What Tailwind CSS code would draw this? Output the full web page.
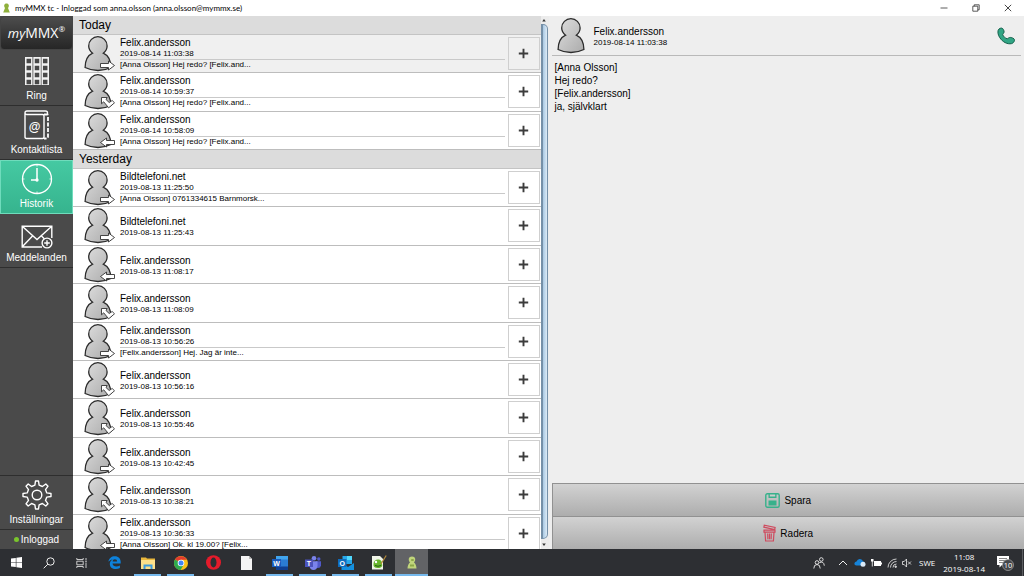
<!DOCTYPE html>
<html lang="sv">
<head>
<meta charset="utf-8">
<title>myMMX tc</title>
<script src="https://cdn.jsdelivr.net/npm/@tailwindcss/browser@4"></script>
</head>
<body class="flex h-screen flex-col overflow-hidden bg-white font-['Liberation_Sans',Arial,sans-serif] text-[10px] text-black">

<svg class="absolute size-0" aria-hidden="true">
  <defs>
    <linearGradient id="body" x1="0" y1="0" x2="1" y2="1"><stop offset="0" stop-color="#dedede"/><stop offset="1" stop-color="#ababab"/></linearGradient>
    <symbol id="person" viewBox="0 0 32 37">
      <path d="M9.6 18.2C6.900 16 5.700 13.500 5.700 10.900A9.200 9.200 0 0 1 24.100 10.900C24.100 13.500 23 16 20.300 18.200C25.400 20.500 27.800 26 27.900 32.500C20 36.500 10 36.500 2.100 32.500C2.200 26 4.500 20.500 9.600 18.200Z" fill="url(#body)" stroke="#2b2b2b" stroke-width="1.300"/>
    </symbol>
    <symbol id="out" viewBox="0 0 32 37"><path d="M17.500 28.500h8v-2.500l6 4.500-6 4.500v-2.500h-8z" fill="#fff" stroke="#333" stroke-width=".9"/></symbol>
    <symbol id="in" viewBox="0 0 32 37"><path d="M31.500 28.500h-8v-2.500l-6 4.500 6 4.500v-2.500h8z" fill="#fff" stroke="#333" stroke-width=".9"/></symbol>
    <symbol id="missed" viewBox="0 0 32 37"><path d="M18.500 24.500h5.700l-1.200 2 3.200 3 3-2 2.300 2.300-5.800 5-5-6-2.200 2z" fill="#fff" stroke="#333" stroke-width=".9"/></symbol>
  </defs>
</svg>

<header class="flex h-4 shrink-0 items-center bg-white">
  <svg class="ml-[3px] h-[10px] w-[7px]" viewBox="0 0 7 10"><path d="M2 5C.5 3 1 .5 3.500.5S6.500 3 5 5l1.800 4.500H.2z" fill="#8fb03c"/></svg>
  <h1 class="ml-[5px] grow font-['Lato','Open_Sans',sans-serif] text-[8px] text-black">myMMX tc - Inloggad som anna.olsson (anna.olsson@mymmx.se)</h1>
  <button aria-label="Minimera" class="flex w-8 justify-center"><svg class="size-2" viewBox="0 0 8 8"><path d="M.5 4h7" stroke="#333" stroke-width=".8"/></svg></button>
  <button aria-label="Återställ" class="flex w-8 justify-center"><svg class="size-2" viewBox="0 0 8 8" fill="none" stroke="#333" stroke-width=".8"><path d="M.8 2.200h5v5h-5zM2.200 2.200V.8h5v5H5.800"/></svg></button>
  <button aria-label="Stäng" class="flex w-8 justify-center"><svg class="size-2" viewBox="0 0 8 8"><path d="M.8.8l6.400 6.400M7.200.8L.8 7.200" stroke="#333" stroke-width=".9"/></svg></button>
</header>

<div class="flex min-h-0 grow">
  <nav class="flex w-[73px] shrink-0 flex-col bg-[#4a4a4a] text-center leading-3 text-white">
    <div class="mb-[2px] flex h-[34px] items-center justify-center rounded border border-[#444] bg-linear-to-b from-[#4d4d4d] to-[#262626]">
      <span class="flex items-center font-['Open_Sans',sans-serif] text-[14px] leading-4"><span class="text-[13px] font-medium italic">my</span>MMX<sup class="text-[8px]">®</sup></span>
    </div>
    <button class="flex h-[54px] flex-col items-center justify-end border-b border-[#2e2e2e] pb-[3px]">
      <svg class="mb-1 h-[30px] w-6" viewBox="0 0 24 30"><path fill="#f2f2f2" d="M0 1h7.500v28H0zM8.300 1h7.500v28H8.300zM16.500 1h7.500v28h-7.500z"/><path d="M3.800 2.800v26M12 2.800v26M20.200 2.800v26" stroke="#484848" stroke-width="4.500" stroke-dasharray="4.500 2.500"/></svg>
      Ring
    </button>
    <button class="flex h-[54px] flex-col items-center justify-end border-b border-[#2e2e2e] pb-[3px]">
      <svg class="mb-1 h-[30px] w-[26px]" viewBox="0 0 26 30" fill="none" stroke="#fff"><path d="M2.500 4.500h16q1.500 0 1.500 1.500V27q0 1.500-1.500 1.500h-16Q1 28.500 1 27V3Q1 1 3 1h18.500q2 0 2 2v2M2.500 4.500Q1 4 1 3" stroke-width="1.400"/><path d="M20 4.500h2.500q1.500 0 1.500 1.500v20.500q0 2-2 2h-2" stroke-width="1.800" stroke-dasharray="4 1.500"/><text x="10.500" y="20.500" text-anchor="middle" font-size="12" fill="#fff" stroke="none" font-family="Liberation Sans" font-weight="bold">@</text></svg>
      Kontaktlista
    </button>
    <button aria-current="page" class="flex h-[54px] flex-col items-center justify-end border border-[#6fdcbc] bg-linear-to-b from-[#45c9a2] to-[#36b48e] pb-[3px]">
      <svg class="mb-[3px] size-8" viewBox="0 0 32 32" fill="none" stroke="#fff" stroke-width="1.300"><circle cx="16" cy="16" r="14.500"/><path d="M16 5v12H10" stroke-width="1.500"/><path d="M16 1.500v2M16 28.500v2M1.500 16h2M28.500 16h2" stroke-width=".8"/><circle cx="16" cy="17" r="1" fill="#fff"/></svg>
      Historik
    </button>
    <button class="flex h-[54px] flex-col items-center justify-end border-b border-[#2e2e2e] pb-[3px]">
      <svg class="mb-[3px] h-6 w-8" viewBox="0 0 32 24" fill="none" stroke="#fff" stroke-width="1.400"><path d="M21 22H1.200V1.200h29.600V13M1.500 1.500L16 14.500 30.500 1.500M1.500 21.500L11.500 11M20.500 11l3 3"/><circle cx="26" cy="18" r="4.900" fill="#484848"/><path d="M26 15.200v5.600M23.200 18h5.600"/></svg>
      Meddelanden
    </button>
    <button class="mt-auto flex h-[55px] flex-col items-center justify-end border-y border-[#2e2e2e] pb-[3px]">
      <svg class="mb-1 size-[30px]" viewBox="0 0 30 30" fill="none" stroke="#fff" stroke-width="1.400" stroke-linejoin="round"><path d="M12.900 5.200L13.500 1h3l.6 4.200 3.300 1.300 3.400-2.500 2.200 2.200-2.500 3.400 1.300 3.300 4.200.6v3l-4.200.6-1.300 3.300 2.500 3.400-2.200 2.200-3.400-2.500-3.300 1.300-.6 4.200h-3l-.6-4.200-3.300-1.300-3.400 2.500L4 23.800l2.500-3.400-1.300-3.300L1 16.500v-3l4.200-.6 1.300-3.300L4 6.200 6.200 4l3.400 2.500z"/><circle cx="15" cy="15" r="4.800"/></svg>
      Inställningar
    </button>
    <div class="flex h-[19px] items-center justify-center gap-[2px] text-[10px]"><span class="size-[5px] rounded-full bg-[#7ac52c]"></span>Inloggad</div>
  </nav>

  <main class="grid min-w-0 grow grid-cols-2">
    <section aria-label="Historik" class="flex min-h-0 overflow-hidden">
      <div id="history" class="min-w-0 grow overflow-hidden bg-white"></div>
      <div class="flex w-2 shrink-0 flex-col bg-[#ececec]" aria-hidden="true">
        <svg class="h-2 w-[6px]" viewBox="0 0 6 8"><path d="M3 3l1.800 2.500H1.200z" fill="#333"/></svg>
        <div class="w-[7px] grow rounded-r-[5px] border border-l-2 border-[#7590a8] bg-linear-to-r from-[#a9c8e2] to-[#dcebf7]"></div>
        <svg class="h-[10px] w-[6px]" viewBox="0 0 6 10"><path d="M3 7l1.800-2.500H1.200z" fill="#333"/></svg>
      </div>
    </section>

    <section aria-label="Samtal" class="flex min-w-0 flex-col bg-[#eeeeee] pl-[3px]">
      <div class="mr-[3px] flex h-10 shrink-0 items-center border-b border-[#b9b9b9]">
        <svg class="ml-1 h-[37px] w-8"><use href="#person"/></svg>
        <div class="ml-[6px] grow pt-[2px]"><h2 class="leading-3">Felix.andersson</h2><p class="text-[8px] leading-[10px]">2019-08-14 11:03:38</p></div>
        <button aria-label="Ring upp" class="mr-[6px]"><svg class="size-[18px]" viewBox="0 0 18 18"><path d="M1.200 3.200C1.800 1.500 4.500.3 5.800 1.700c1 1.300 1.700 2.900 1 4.200-.5.900-1.300 1.100-1 2 .7 1.700 2.300 3.200 4.200 3.800 1 .2 1.300-.9 2.500-1.200 1.500-.3 3.200.4 4.500 1.400 1.300 1.300-.2 4-2.300 4.700-4.500 1-9.200-1.800-11.900-5.900C1.200 8.300.5 5.400 1.200 3.200z" fill="#31a585" stroke="#14604b" stroke-width="1"/></svg></button>
      </div>
      <div class="grow pt-[5px] pl-[3px] leading-[13px]"><p>[Anna Olsson]</p><p>Hej redo?</p><p>[Felix.andersson]</p><p>ja, självklart</p></div>
      <button class="flex h-[33px] items-center justify-center gap-1 border-t border-l border-[#919191] bg-linear-to-b from-[#d2d2d2] to-[#adadad]">
        <svg class="size-[15px]" viewBox="0 0 15 15"><rect x=".8" y=".8" width="13.400" height="13.400" rx="1.500" fill="none" stroke="#37b18b" stroke-width="1.400"/><path d="M3.500 1h8v4h-8zM3.500 7.500h8v5h-8z" fill="#37b18b"/><path d="M4.800 1.500h5.400v2H4.800z" fill="#ccc"/></svg>Spara
      </button>
      <button class="flex h-[33px] items-center justify-center gap-1 border-t border-l border-[#919191] bg-linear-to-b from-[#d2d2d2] to-[#adadad]">
        <svg class="h-[18px] w-[13px]" viewBox="0 0 13 18" fill="none" stroke="#cf4a5e" stroke-width="1.200"><path d="M.9 3.200l.4-2 10.800 2.300-.4 2zM1 6.200h11v2H1zM2 8.200l.6 8.800h7.800l.6-8.800M4.700 9.500l.2 5.700M6.500 9.500v5.700M8.300 9.500l-.2 5.700"/></svg>Radera
      </button>
    </section>
  </main>
</div>

<footer class="flex h-[27px] shrink-0 bg-[#2d2f33] text-white">
  <button aria-label="Start" class="flex w-8 items-center justify-center"><svg class="size-[11px]" viewBox="0 0 11 11"><path d="M0 1.600L4.800.9v4.300H0zM5.400.8L11 0v5.200H5.400zM0 5.800h4.800v4.300L0 9.400zM5.400 5.800H11V11l-5.600-.8z" fill="#fff"/></svg></button>
  <button aria-label="Sök" class="flex w-[33px] items-center justify-center"><svg class="size-3" viewBox="0 0 12 12" fill="none" stroke="#eee"><circle cx="7.500" cy="4.500" r="3.700"/><path d="M4.800 7.200L.7 11.300"/></svg></button>
  <button aria-label="Aktivitetsvy" class="flex w-[33px] items-center justify-center"><svg class="h-[10px] w-3" viewBox="0 0 12 10" fill="none" stroke="#ddd" stroke-width=".9"><path d="M.8 0v1.500h6.400V0M.8 3.200h6.400v3.600H.8zM.8 10V8.500h6.400V10M10 0v2M10 4.500V10M9 3.200h2"/></svg></button>
  <button aria-label="Edge" class="flex w-[33px] items-center justify-center"><svg class="size-[13px]" viewBox="0 0 13 13"><path d="M.4 5.800C1 2.200 3.500.2 6.800.2c3.800 0 6 2.600 5.900 6v1.400H4.500c.2 2 1.800 2.800 3.800 2.800 1.400 0 2.600-.4 3.600-1v2.700c-1.200.6-2.600.9-4.200.9C4.200 13 1.800 11 1.800 7.900c0-2 1.200-3.700 2.900-4.500C2.900 3.600 1.400 4.500.4 5.800zM4.600 5.500h4.500c0-1.300-.8-2.200-2.200-2.200-1.300 0-2.100.9-2.300 2.200z" fill="#0d82dc"/></svg></button>
  <button aria-label="Utforskaren" class="flex w-[33px] flex-col items-center justify-between"><svg class="mt-2 h-3 w-[14px]" viewBox="0 0 14 12"><path d="M0 .5h5l1 1h8V12H0z" fill="#e9b83d"/><path d="M0 3h14v9H0z" fill="#fde08a"/><path d="M2.500 12V7.500h9V12h-2V9.500h-5V12z" fill="#3e9bdc"/></svg><span class="h-[2px] w-[27px] bg-[#76b9ed]"></span></button>
  <button aria-label="Chrome" class="flex w-[33px] flex-col items-center justify-between"><svg class="mt-[7px] size-[14px]" viewBox="0 0 14 14"><circle cx="7" cy="7" r="7" fill="#fbc116"/><path d="M7 7L1 3.500A7 7 0 0 1 13.100 3.800H7z" fill="#e33b2e"/><path d="M1 3.400A7 7 0 0 0 6.600 14L9.800 8.600 7 7z" fill="#2da94f"/><circle cx="7" cy="7" r="3.300" fill="#fff"/><circle cx="7" cy="7" r="2.500" fill="#4285f4"/></svg><span class="h-[2px] w-[27px] bg-[#76b9ed]"></span></button>
  <button aria-label="Opera" class="flex w-[33px] items-center justify-center"><svg class="size-[15px]" viewBox="0 0 15 15"><ellipse cx="7.500" cy="7.500" rx="7.500" ry="7.300" fill="#e51b2b"/><ellipse cx="7.500" cy="7.500" rx="3" ry="5" fill="#2d2f33"/></svg></button>
  <button aria-label="Dokument" class="flex w-[33px] items-center justify-center"><svg class="h-[14px] w-[11px]" viewBox="0 0 11 14"><path d="M0 0h8l3 3v11H0z" fill="#f4f4f4"/><path d="M8 0v3h3z" fill="#bbb"/></svg></button>
  <button aria-label="Word" class="flex w-[33px] flex-col items-center justify-between"><svg class="mt-[7px] h-[14px] w-4" viewBox="0 0 16 14"><path d="M4 0h12v14H4z" fill="#2b7cd3"/><path d="M4 0h12v3.500H4z" fill="#41a5ee"/><path d="M4 10.500h12V14H4z" fill="#103f91"/><path d="M0 3h9v8H0z" fill="#185abd"/><text x="4.500" y="9.500" text-anchor="middle" font-size="7" font-weight="bold" fill="#fff">W</text></svg><span class="h-[2px] w-[27px] bg-[#76b9ed]"></span></button>
  <button aria-label="Teams" class="flex w-[33px] flex-col items-center justify-between"><svg class="mt-[7px] h-[14px] w-4" viewBox="0 0 16 14"><circle cx="9" cy="2.300" r="2.300" fill="#7b83eb"/><circle cx="13.800" cy="3" r="1.700" fill="#5059c9"/><path d="M11 5.300h5v4.200q-.5 3-4 2.500z" fill="#5059c9"/><path d="M4.500 5.300h8V10q-.5 4-4 4t-4-4z" fill="#7b83eb"/><path d="M0 3.500h8v7.500H0z" fill="#4b53bc"/><text x="4" y="9.700" text-anchor="middle" font-size="7" font-weight="bold" fill="#fff">T</text></svg><span class="h-[2px] w-[27px] bg-[#76b9ed]"></span></button>
  <button aria-label="Outlook" class="flex w-[33px] flex-col items-center justify-between"><svg class="mt-[7px] h-[14px] w-4" viewBox="0 0 16 14"><path d="M4.500 0H14v8H4.500z" fill="#28a8ea"/><path d="M9 0h5v4H9z" fill="#50d9ff"/><path d="M3.500 7L10 11l6-4v7H3.500z" fill="#1490df"/><path d="M0 3h8.500v8H0z" fill="#0f6cbd"/><text x="4.200" y="9.500" text-anchor="middle" font-size="7" font-weight="bold" fill="#fff">O</text></svg><span class="h-[2px] w-[27px] bg-[#76b9ed]"></span></button>
  <button aria-label="Notepad++" class="flex w-[33px] flex-col items-center justify-between"><svg class="mt-[6px] h-[15px] w-4" viewBox="0 0 16 15"><path d="M1 1h8l3 3v10.500H1z" fill="#f1f5e9"/><path d="M2.500 9c0-3 2-4.500 4.500-4.500S11.500 6.500 11 9c1 2-.5 4-4 4s-5-1.500-4.500-4z" fill="#67b52c"/><circle cx="5" cy="7" r="1.200" fill="#fff"/><path d="M4 10.500q3 1.500 6 0" stroke="#255e16" fill="none"/><path d="M15.200.5L10 9" stroke="#b48a3a" stroke-width="1.200"/></svg><span class="h-[2px] w-[27px] bg-[#76b9ed]"></span></button>
  <button aria-label="myMMX" class="flex w-[33px] items-center justify-center border-b-2 border-b-[#76b9ed] bg-[#626366] pt-[2px]"><svg class="h-[13px] w-[10px]" viewBox="0 0 10 13"><path d="M3 6.500C.8 4 1.500.5 5 .5S9.200 4 7 6.500c1.500 1 2.500 3.500 2.500 6h-9c0-2.500 1-5 2.500-6z" fill="#c0d47b"/><path d="M4.200 3h2.500v2H4.200zM3 8.500h4v2H3z" fill="#8da749"/></svg></button>

  <div class="ml-auto flex items-center font-['Open_Sans',sans-serif] text-[8px]">
    <svg class="mr-[13px] size-3" viewBox="0 0 12 12" fill="none" stroke="#eee" stroke-width=".9"><circle cx="4" cy="5.500" r="1.800"/><circle cx="8.300" cy="2.500" r="1.800"/><path d="M.8 11.500q0-4 3.200-4t3.200 4M6.300 5.700q4.500-2 5 3"/></svg>
    <svg class="mr-[6px] h-[10px] w-[10px]" viewBox="0 0 10 10" fill="none" stroke="#eee"><path d="M1 7l4-4 4 4"/></svg>
    <svg class="mr-[5px] h-[9px] w-3" viewBox="0 0 12 9"><path d="M2.500 7.500Q0 7 .5 5q.5-1.500 2-1.500Q3.500.8 6 1t3 2.500q2.500.3 2 2.500-.5 1.500-2 1.500z" fill="#1683d8"/><circle cx="9" cy="6.300" r="2.500" fill="#dbeaf6"/></svg>
    <svg class="mr-[5px] h-2 w-[11px]" viewBox="0 0 11 8"><path d="M3 2h7v5H3z" fill="#fff"/><path d="M10 3.500h1v2h-1zM0 0h2.500v2.500H0z" fill="#fff"/><path d="M1.300 2v5.500" stroke="#fff" stroke-width=".8"/></svg>
    <svg class="mr-[5px] size-[10px]" viewBox="0 0 10 10" fill="none" stroke="#ddd" stroke-width=".9"><path d="M1 9.500A8.500 8.500 0 0 1 9.500 1M3.500 9.500a6 6 0 0 1 6-6M6 9.500A3.500 3.500 0 0 1 9.500 6"/><circle cx="8.700" cy="8.700" r=".8" fill="#ddd"/></svg>
    <svg class="mr-[7px] size-[10px]" viewBox="0 0 10 10" fill="none" stroke="#eee" stroke-width=".8"><path d="M.5 3.500h1.700L4.500 1v8L2.200 6.500H.5zM6 3.500l3 3M9 3.500l-3 3"/></svg>
    <span class="mr-2">SWE</span>
    <time class="mr-3 text-center leading-3">11:08<br>2019-08-14</time>
    <button aria-label="Meddelandecenter" class="mr-2 border-0"><svg class="h-4 w-[17px]" viewBox="0 0 17 16"><path d="M0 1h12v9H5l-2.500 2.500V10H0z" fill="#fff"/><path d="M2 3.500h8M2 5.500h8M2 7.500h5" stroke="#555" stroke-width=".7"/><circle cx="11" cy="10" r="5.500" fill="#45474b" stroke="#aaa" stroke-width=".7"/><text x="11" y="12.700" text-anchor="middle" font-size="7.500" fill="#fff">10</text></svg></button>
    <span class="mr-px h-full w-px bg-[#5b5d61]"></span>
  </div>
</footer>

<script>
  // type: out = outgoing, in = incoming, missed = missed call
  const F = 'Felix.andersson', B = 'Bildtelefoni.net', HEJ = '[Anna Olsson] Hej redo? [Felix.and...';
  const today = [
    [F, '2019-08-14 11:03:38', 'out', HEJ], [F, '2019-08-14 10:59:37', 'missed', HEJ], [F, '2019-08-14 10:58:09', 'in', HEJ]
  ];
  const yesterday = [
    [B, '2019-08-13 11:25:50', 'out', '[Anna Olsson] 0761334615 Barnmorsk...'],
    [B, '2019-08-13 11:25:43', 'out'], [F, '2019-08-13 11:08:17', 'in'], [F, '2019-08-13 11:08:09', 'missed'],
    [F, '2019-08-13 10:56:26', 'out', '[Felix.andersson] Hej. Jag är inte...'],
    [F, '2019-08-13 10:56:16', 'missed'], [F, '2019-08-13 10:55:46', 'missed'], [F, '2019-08-13 10:42:45', 'out'],
    [F, '2019-08-13 10:38:21', 'missed'], [F, '2019-08-13 10:36:33', 'in', '[Anna Olsson] Ok. kl 19.00? [Felix...']
  ];
  const row = ([name, date, type, text], selected) => `
    <li class="flex items-start border-b border-[#bdbdbd] ${selected ? 'bg-[#f0f0f0]' : 'bg-white'}">
      <svg class="ml-[10px] h-[37px] w-8 shrink-0"><use href="#person"/><use href="#${type}"/></svg>
      <div class="mr-[3px] ml-[5px] flex min-w-0 grow flex-col ${text ? 'pt-[2px]' : 'pt-[9px]'}">
        <h3 class="leading-3">${name}</h3>
        <p class="text-[8px] leading-[10px]">${date}</p>
        ${text ? `<p class="border-t border-[#c9c9c9] text-[8px] leading-[10px]">${text}</p>` : ''}
      </div>
      <button aria-label="Lägg till" class="mt-[2px] mr-px flex h-[33px] w-8 shrink-0 items-center justify-center border border-[#cfcfcf]">
        <svg class="size-[11px]" viewBox="0 0 11 11"><path d="M5.500.8v9.400M.8 5.500h9.400" stroke="#3c3c3c" stroke-width="1.900"/></svg>
      </button>
    </li>`;
  const head = t => `<h2 class="h-[19px] border-b border-[#c4c4c4] bg-[#dcdcdc] pl-[6px] text-[12px] leading-[18px]">${t}</h2>`;
  document.getElementById('history').innerHTML =
    head('Today') + `<ul class="grid min-h-[115px] auto-rows-fr">${today.map((r, i) => row(r, i === 0)).join('')}</ul>` +
    head('Yesterday') + `<ul class="grid min-h-[384px] auto-rows-fr">${yesterday.map(r => row(r, false)).join('')}</ul>`;
</script>
</body>
</html>
